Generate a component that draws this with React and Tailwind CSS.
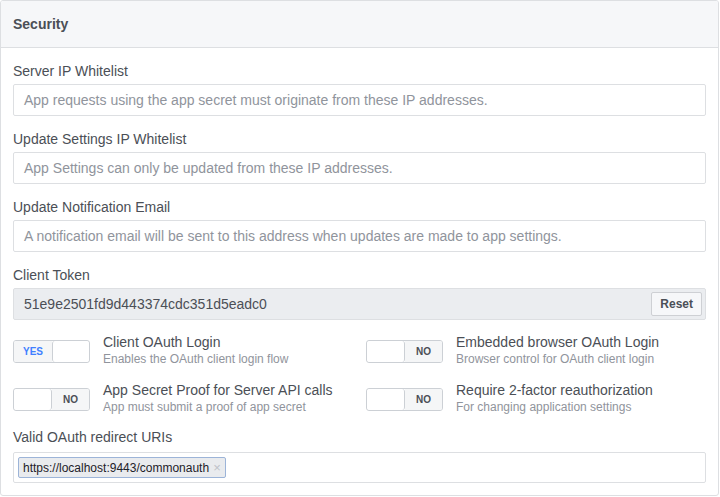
import React from 'react';

const font = { fontFamily: '"Liberation Sans", Arial, Helvetica, sans-serif' };

const Field = ({ label, placeholder }) => (
  <div className="mt-[14px]">
    <div className="text-[14px] leading-[18px] text-[#4b4f56] mb-[4px]">{label}</div>
    <div className="h-[32px] border border-[#dddfe2] rounded-[2px] bg-white flex items-center px-[10px] text-[14px] text-[#90949c]">
      {placeholder}
    </div>
  </div>
);

const Toggle = ({ on }) => (
  <div className="mt-[7px] w-[77px] h-[23px] shrink-0 flex rounded-[3px] border border-[#ccd0d5] overflow-hidden">
    {on ? (
      <>
        <div className="w-[38px] flex items-center justify-center bg-[#f5f6f7] text-[10px] font-bold text-[#4080ff]">YES</div>
        <div className="flex-1 bg-white border-l border-[#ccd0d5] rounded-[3px]" />
      </>
    ) : (
      <>
        <div className="w-[38px] bg-white border-r border-[#ccd0d5] rounded-[3px]" />
        <div className="flex-1 flex items-center justify-center bg-[#f5f6f7] text-[10px] font-bold text-[#4b4f56]">NO</div>
      </>
    )}
  </div>
);

const Option = ({ on, title, sub }) => (
  <div className="flex items-start gap-[13px] h-[35px]">
    <Toggle on={on} />
    <div>
      <div className="text-[14px] leading-[18px] text-[#4b4f56]">{title}</div>
      <div className="text-[12px] leading-[16px] text-[#90949c]">{sub}</div>
    </div>
  </div>
);

export default function App() {
  return (
    <div className="w-[720px] h-[497px] bg-white" style={font}>
      <div className="w-[719px] h-[496px] border border-[#dddfe2] rounded-[3px] overflow-hidden">
        <div className="h-[47px] bg-[#f6f7f9] border-b border-[#dddfe2] flex items-center px-[12px]">
          <span className="text-[14px] font-bold text-[#4b4f56]">Security</span>
        </div>
        <div className="px-[12px]">
          <Field label="Server IP Whitelist" placeholder="App requests using the app secret must originate from these IP addresses." />
          <Field label="Update Settings IP Whitelist" placeholder="App Settings can only be updated from these IP addresses." />
          <Field label="Update Notification Email" placeholder="A notification email will be sent to this address when updates are made to app settings." />

          <div className="mt-[14px]">
            <div className="text-[14px] leading-[18px] text-[#4b4f56] mb-[4px]">Client Token</div>
            <div className="h-[32px] border border-[#dddfe2] rounded-[2px] bg-[#ebedf0] flex items-center justify-between pl-[10px] pr-[3px]">
              <span className="text-[14px] text-[#4b4f56]">51e9e2501fd9d443374cdc351d5eadc0</span>
              <button className="h-[24px] px-[8px] bg-[#f6f7f9] border border-[#ced0d4] rounded-[2px] text-[12px] font-bold text-[#4b4f56]">
                Reset
              </button>
            </div>
          </div>

          <div className="mt-[13px] grid grid-cols-2 gap-x-[13px] gap-y-[13px]">
            <Option on title="Client OAuth Login" sub="Enables the OAuth client login flow" />
            <Option title="Embedded browser OAuth Login" sub="Browser control for OAuth client login" />
            <Option title="App Secret Proof for Server API calls" sub="App must submit a proof of app secret" />
            <Option title="Require 2-factor reauthorization" sub="For changing application settings" />
          </div>

          <div className="mt-[12px]">
            <div className="text-[14px] leading-[18px] text-[#4b4f56] mb-[6px]">Valid OAuth redirect URIs</div>
            <div className="h-[31px] border border-[#dddfe2] rounded-[2px] bg-white flex items-center px-[4px]">
              <span className="h-[21px] flex items-center gap-[4px] px-[4px] bg-[#e9ebee] border border-[#9cb4d8] rounded-[2px] text-[12px] text-[#1d2129]">
                https://localhost:9443/commonauth
                <span className="text-[#bec2c9] text-[13px] leading-none">×</span>
              </span>
            </div>
          </div>
        </div>
      </div>
    </div>
  );
}
